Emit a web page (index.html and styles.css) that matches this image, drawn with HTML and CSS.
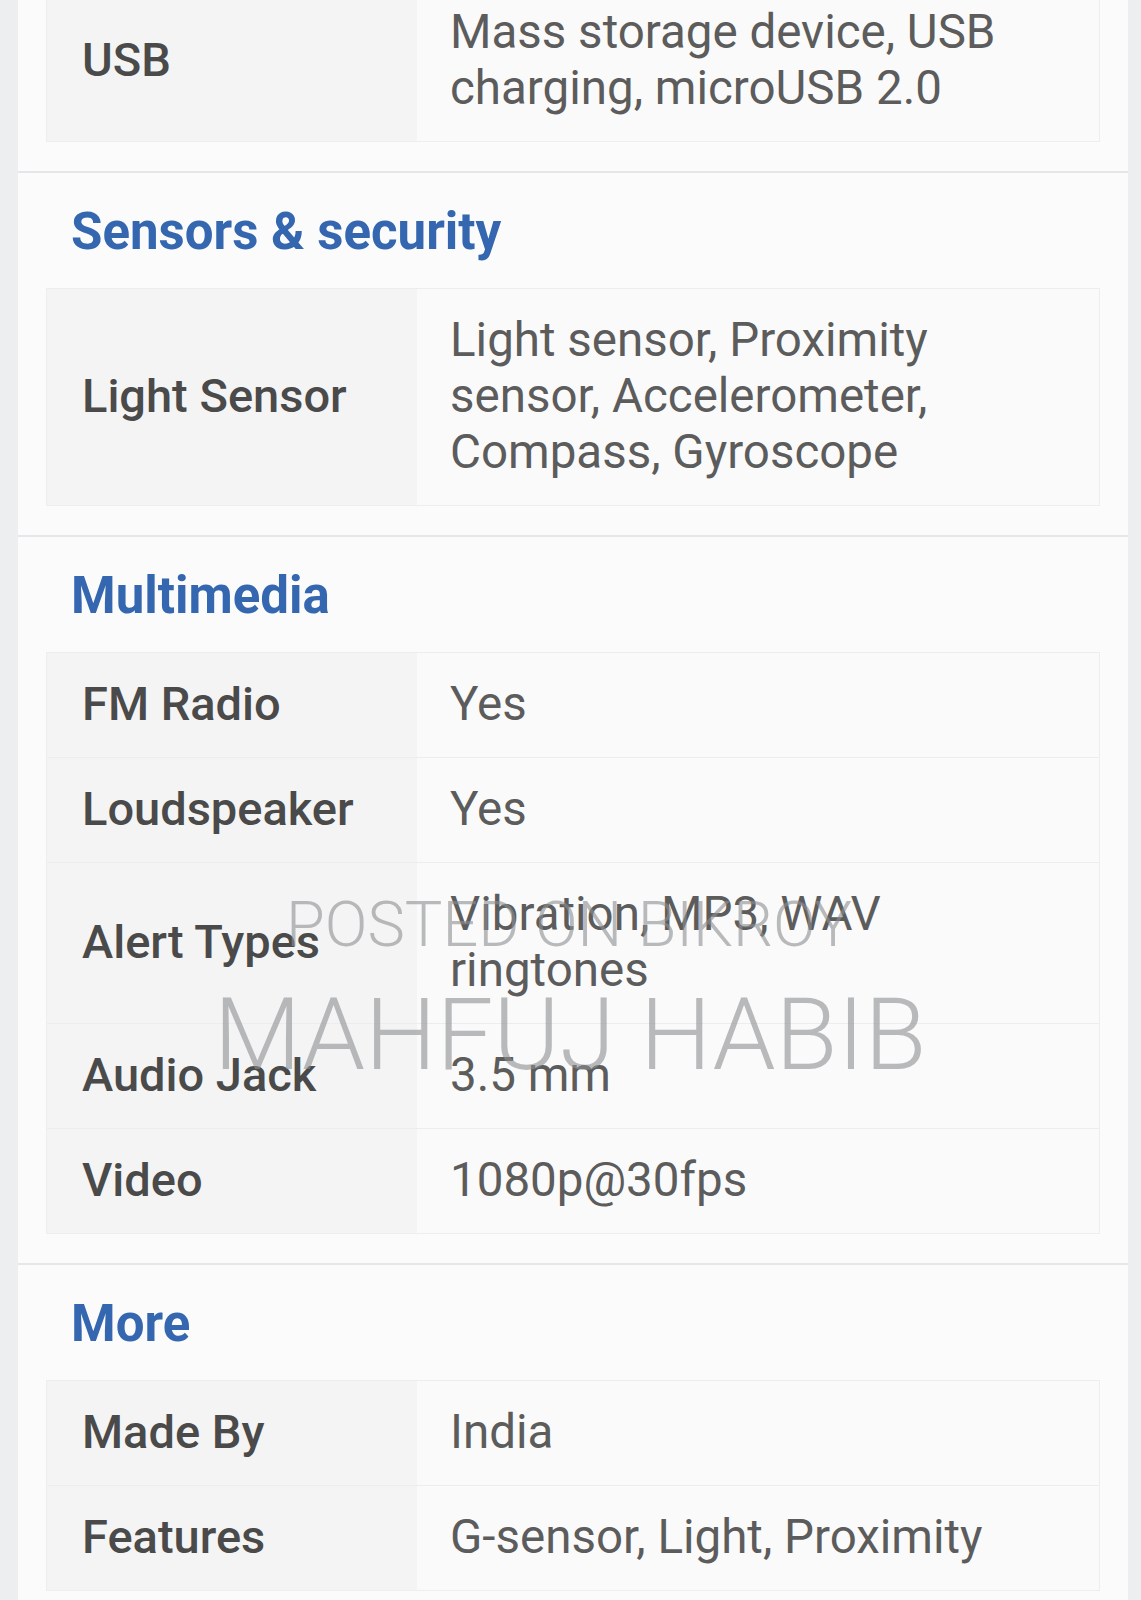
FILE: index.html
```html
<!DOCTYPE html>
<html lang="en">

<head>
    <meta charset="UTF-8">
    <meta name="viewport" content="width=device-width, initial-scale=1.0">
    <title>Specifications</title>
    <link rel="stylesheet" href="styles.css">
</head>

<body>
    <div class="page">
        <section class="spec-group first">
            <table class="spec-table">
                <tr>
                    <td class="label">USB</td>
                    <td class="value">Mass storage device, USB charging, microUSB 2.0</td>
                </tr>
            </table>
        </section>

        <section class="spec-group">
            <h2>Sensors &amp; security</h2>
            <table class="spec-table">
                <tr>
                    <td class="label">Light Sensor</td>
                    <td class="value">Light sensor, Proximity sensor, Accelerometer, Compass, Gyroscope</td>
                </tr>
            </table>
        </section>

        <section class="spec-group">
            <h2>Multimedia</h2>
            <table class="spec-table">
                <tr>
                    <td class="label">FM Radio</td>
                    <td class="value">Yes</td>
                </tr>
                <tr>
                    <td class="label">Loudspeaker</td>
                    <td class="value">Yes</td>
                </tr>
                <tr>
                    <td class="label">Alert Types</td>
                    <td class="value">Vibration, MP3, WAV ringtones</td>
                </tr>
                <tr>
                    <td class="label">Audio Jack</td>
                    <td class="value">3.5 mm</td>
                </tr>
                <tr>
                    <td class="label">Video</td>
                    <td class="value">1080p@30fps</td>
                </tr>
            </table>
        </section>

        <section class="spec-group">
            <h2>More</h2>
            <table class="spec-table">
                <tr>
                    <td class="label">Made By</td>
                    <td class="value">India</td>
                </tr>
                <tr>
                    <td class="label">Features</td>
                    <td class="value">G-sensor, Light, Proximity</td>
                </tr>
            </table>
        </section>

        <div class="watermark">
            <div class="wm-small">POSTED ON BIKROY</div>
            <div class="wm-big">MAHFUJ HABIB</div>
        </div>
    </div>
</body>

</html>
```

FILE: styles.css
```css
body {
    margin: 0;
    font-family: Roboto, "Liberation Sans", Arial, sans-serif;
    background: #eceef0;
    height: 1600px;
    overflow: hidden;
}

.page {
    position: relative;
    margin: 0 13px 0 18px;
    background: #fbfbfb;
    min-height: 1600px;
}

.spec-group {
    padding: 31px 28px 29px;
    border-top: 2px solid #e4e6e8;
}

.spec-group.first {
    padding-top: 0;
    border-top: none;
}

.spec-group.first .spec-table {
    margin-top: -20px;
}

h2 {
    margin: 0 0 28px;
    padding-left: 25px;
    font-size: 51px;
    line-height: 56px;
    font-weight: 700;
    color: #3467af;
}

.spec-table {
    width: 100%;
    border-collapse: collapse;
    border: 1px solid #eeeeee;
}

.spec-table td {
    padding: 23px 60px 25px 33px;
    font-size: 47.5px;
    line-height: 56px;
    vertical-align: middle;
    border-top: 1px solid #ededed;
}

.spec-table .label {
    width: 335px;
    padding-left: 35px;
    padding-right: 0;
    background: #f4f4f4;
    color: #4a4a4a;
    font-size: 47px;
    font-weight: 500;
}

.spec-table .value {
    background: #fafafa;
    color: #5c5c5c;
}

.watermark {
    position: absolute;
    left: 0;
    right: 0;
    top: 905px;
    text-align: center;
    color: rgba(140, 142, 145, 0.6);
    pointer-events: none;
}

.wm-small {
    font-size: 63px;
    font-weight: 300;
    line-height: 80px;
    padding-right: 8px;
}

.wm-big {
    font-size: 101px;
    font-weight: 300;
    line-height: 140px;
    padding-right: 6px;
}
```
